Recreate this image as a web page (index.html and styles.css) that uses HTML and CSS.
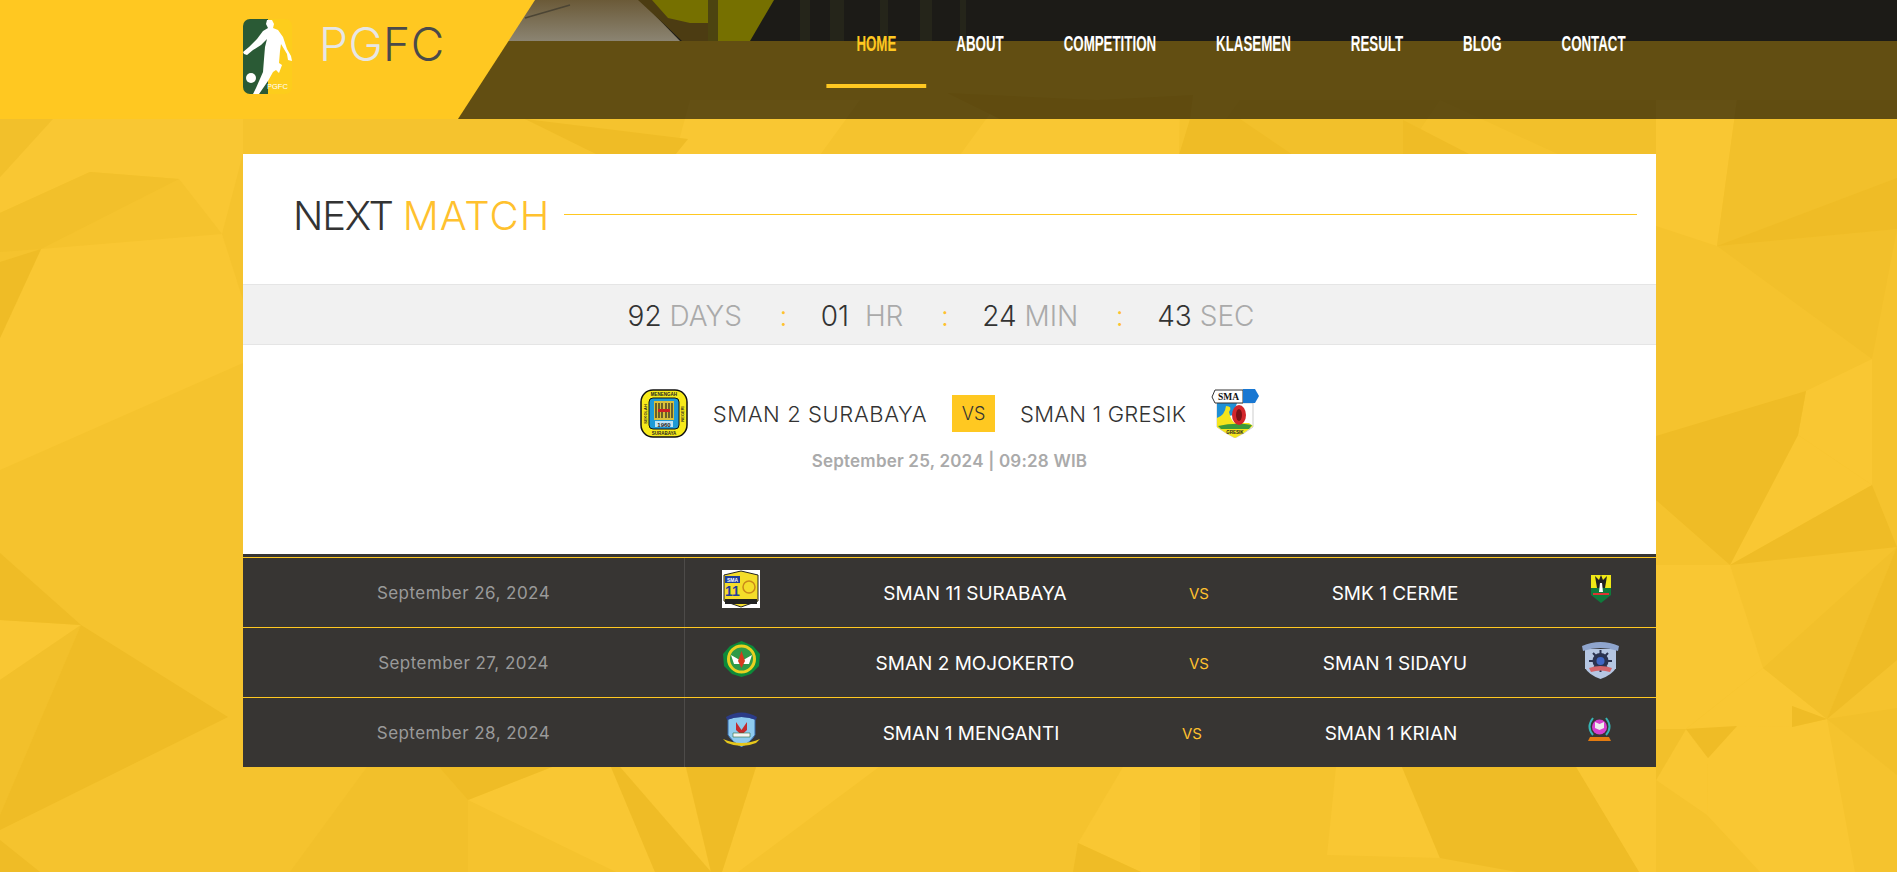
FILE: index.html
```html
<!DOCTYPE html>
<html lang="en">
<head>
  <meta charset="UTF-8" />
  <meta name="viewport" content="width=device-width, initial-scale=1.0" />
  <title>PGFC</title>
  <link rel="stylesheet" href="styles.css">
</head>
<body>
  <!-- faceted yellow wallpaper -->
  <svg class="page-bg" viewBox="0 0 1897 872" aria-hidden="true">
    <rect width="1897" height="872" fill="#f5c32e"/>
    <g fill="#f9c733">
      <polygon points="70,100 243,100 243,154 222,234 179,179 90,172 0,213 0,177"/>
      <polygon points="41,249 222,234 243,300 243,363 0,470 0,338"/>
      <polygon points="0,620 81,625 0,680"/>
      <polygon points="1656,100 1737,100 1717,246 1656,226"/>
      <polygon points="1806,391 1872,359 1872,485 1798,435"/>
      <polygon points="1798,435 1872,485 1730,565"/>
      <polygon points="1656,565 1730,565 1763,668 1686,729 1656,729"/>
      <polygon points="1763,668 1827,719 1792,706 1792,727 1686,729"/>
      <polygon points="1792,727 1827,719 1855,872 1760,872 1707,815 1708,758 1737,726"/>
      <polygon points="1686,729 1708,758 1707,815 1656,780"/>
      <polygon points="552,767 611,767 655,872 616,872 468,800"/>
      <polygon points="620,767 686,767 711,872"/>
      <polygon points="756,767 879,767 738,872 722,872"/>
      <polygon points="1123,767 1200,767 1200,872 1141,872 1078,843"/>
      <polygon points="1336,767 1402,767 1440,858 1327,855"/>
      <polygon points="1576,767 1656,767 1656,872 1639,872"/>
      <polygon points="690,100 860,100 820,155 675,155"/>
      <polygon points="1000,100 1180,100 1179,155 960,155"/>
      <polygon points="1293,155 1285,100 1305,100"/>
    </g>
    <g fill="#f2c02b">
      <polygon points="0,100 70,100 0,177"/>
      <polygon points="90,172 179,179 41,249 0,252 0,213"/>
      <polygon points="0,680 81,625 0,815"/>
      <polygon points="1737,100 1897,100 1897,229 1717,246"/>
      <polygon points="1717,246 1897,229 1872,359"/>
      <polygon points="1763,668 1897,547 1827,719"/>
      <polygon points="1827,719 1897,708 1897,775"/>
      <polygon points="1656,729 1686,729 1656,780"/>
      <polygon points="367,767 439,767 468,800 468,872 290,872"/>
      <polygon points="1200,155 1240,100 1440,100 1403,155"/>
      <polygon points="1440,100 1656,100 1656,155 1560,155"/>
    </g>
    <g fill="#efbc26">
      <polygon points="0,262 41,249 0,338"/>
      <polygon points="0,553 81,625 0,620"/>
      <polygon points="81,625 228,717 0,830 0,815"/>
      <polygon points="0,840 40,872 0,872"/>
      <polygon points="1717,246 1897,178 1897,229"/>
      <polygon points="1656,436 1806,391 1798,435 1730,565 1656,500"/>
      <polygon points="1872,485 1897,547 1730,565"/>
      <polygon points="1897,547 1897,660 1827,719"/>
      <polygon points="1792,706 1827,719 1792,727"/>
      <polygon points="1686,729 1737,726 1708,758"/>
      <polygon points="439,767 552,767 468,800"/>
      <polygon points="611,767 620,767 711,872 655,872"/>
      <polygon points="686,767 756,767 722,872 711,872"/>
      <polygon points="1078,843 1141,872 1073,872"/>
      <polygon points="1402,767 1576,767 1639,872 1517,872 1440,858"/>
      <polygon points="525,119 688,139 675,155 598,155"/>
      <polygon points="1179,155 1190,119 1240,119 1293,155"/>
      <polygon points="1403,120 1471,155 1403,155"/>
      <polygon points="947,93 1097,100 1193,95 1190,119 1000,119"/>
    </g>
  </svg>

  <header class="site-header">
    <svg class="header-photo" viewBox="0 0 1897 41" preserveAspectRatio="none" aria-hidden="true">
      <defs>
        <linearGradient id="floor" x1="0" y1="0" x2="0" y2="1">
          <stop offset="0" stop-color="#6b5a38"/>
          <stop offset="1" stop-color="#8b8472"/>
        </linearGradient>
      </defs>
      <rect width="1897" height="41" fill="#1c1b17"/>
      <polygon points="774,0 750,41 690,41 635,0" fill="#767000"/>
      <polygon points="500,0 640,0 680,41 500,41" fill="url(#floor)"/>
      <polygon points="638,0 652,0 668,18 690,23 712,23 712,41 682,41 664,24" fill="#4c3c12"/>
      <rect x="708" width="10" height="41" fill="#4c4410"/>
      <path d="M525 18 L570 5" stroke="#4c4534" stroke-width="1.5"/>
      <g fill="#25251a">
        <rect x="800" width="10" height="41"/>
        <rect x="830" width="14" height="41"/>
        <rect x="880" width="8" height="41"/>
        <rect x="920" width="12" height="41"/>
        <rect x="960" width="6" height="41"/>
      </g>
    </svg>
    <div class="header-yellow"></div>
    <div class="header-inner">
      <a class="brand" href="#">
        <svg class="brand-logo" viewBox="0 0 49 75">
          <defs><clipPath id="logoClip"><rect width="49" height="75" rx="7"/></clipPath></defs>
          <g clip-path="url(#logoClip)">
            <rect width="49" height="75" fill="#fdcd1c"/>
            <rect width="25" height="75" fill="#2a5a35"/>
          </g>
          <path fill="#fff" d="M24 1 L29 1 L31 5 L30 9 L35 11 L40 18 L44 30 L48 37 L49 42 L45 41 L44 35 L38 25 L37 32 L36 44 L39 46 L36 54 L33 51 L30 53 L25 62 L16 75 L10 75 L13 69 L20 53 L21 40 L22 28 L24 20 L18 26 L10 31 L4 36 L1 35 L0 33 L6 28 L14 20 L20 12 L25 9 L23 5 Z"/>
          <circle cx="8" cy="59" r="5" fill="#fff"/>
          <text class="brand-logo-text" x="24" y="70">PGFC</text>
        </svg>
        <span class="brand-name"><span class="brand-pg">PG</span><span class="brand-fc">FC</span></span>
      </a>
      <div class="nav-wrap">
        <nav class="main-nav">
          <a class="active" href="#">HOME</a>
          <a href="#">ABOUT</a>
          <a href="#">COMPETITION</a>
          <a href="#">KLASEMEN</a>
          <a href="#">RESULT</a>
          <a href="#">BLOG</a>
          <a href="#">CONTACT</a>
        </nav>
      </div>
    </div>
  </header>

  <main class="match-card">
    <div class="card-title">
      <h2>NEXT <span>MATCH</span></h2>
      <div class="title-line"></div>
    </div>

    <div class="countdown">
      <div class="count-unit"><b>92</b> DAYS</div>
      <div class="count-sep">:</div>
      <div class="count-unit"><b>01</b> &nbsp;HR</div>
      <div class="count-sep">:</div>
      <div class="count-unit"><b>24</b> MIN</div>
      <div class="count-sep">:</div>
      <div class="count-unit"><b>43</b> SEC</div>
    </div>

    <section class="next-match">
      <div class="next-teams">
        <svg class="crest-lg" viewBox="0 0 48 49">
          <rect x="1" y="1" width="46" height="47" rx="12" fill="#f7ea1a" stroke="#111" stroke-width="1.5"/>
          <rect x="9" y="9" width="30" height="31" rx="4" fill="#1e9ad6" stroke="#111"/>
          <rect x="14" y="12" width="20" height="19" fill="#d9c13a"/>
          <path d="M16 14v15M19 14v15M22 14v15M26 14v15M29 14v15M32 14v15" stroke="#222" stroke-width="1.2"/>
          <rect x="18" y="20" width="12" height="3" fill="#c22"/>
          <rect x="15" y="32" width="18" height="6" fill="#bfe3f4"/>
          <text class="crest-text" x="24" y="37.500" font-size="6">1960</text>
          <text class="crest-text" x="24" y="7" font-size="4.500">MENENGAH</text>
          <text class="crest-text" x="24" y="45.500" font-size="4.500">SURABAYA</text>
          <text class="crest-text" transform="translate(7 25) rotate(-90)" font-size="4">SEKOLAH</text>
          <text class="crest-text" transform="translate(44 25) rotate(-90)" font-size="4">NEGERI</text>
        </svg>
        <span class="team-name">SMAN 2 SURABAYA</span>
        <span class="vs-box">VS</span>
        <span class="team-name team-name-away">SMAN 1 GRESIK</span>
        <svg class="crest-lg" viewBox="0 0 48 49">
          <path d="M6 14 L42 14 L42 38 Q34 44 24 49 Q14 44 6 38 Z" fill="#fff" stroke="#999" stroke-width=".5"/>
          <path d="M6 14 L26 14 L22 26 L6 30 Z" fill="#1e8fd6"/>
          <path d="M6 36 L6 29 Q14 26 15 17 Q22 17 18 23 Q20 32 24 34 L38 34 L42 37 Q34 44 24 49 Q14 44 6 38 Z" fill="#f5e51c"/>
          <path d="M7 37 Q24 33 41 36 L38 40 L10 40 Z" fill="#3c9a3a"/>
          <ellipse cx="28" cy="26" rx="7" ry="10" fill="#d3262b"/>
          <ellipse cx="28" cy="26" rx="3" ry="6" fill="#7a1215"/>
          <path d="M1 8 L4 1 L32 1 L32 14 L4 14 Z" fill="#fff" stroke="#333"/>
          <path d="M32 0 L44 0 L48 7 L44 14 L32 14 Z" fill="#1877d2"/>
          <text class="crest-serif" x="17.500" y="11" font-size="9.500">SMA</text>
          <text class="crest-text" x="24" y="45" font-size="4.500">GRESIK</text>
        </svg>
      </div>
      <div class="next-date">September 25, 2024 | 09:28 WIB</div>
    </section>

    <section class="fixtures">
      <div class="fixture">
        <div class="fixture-date">September 26, 2024</div>
        <div class="fixture-logo">
          <svg class="crest" width="38" height="38" viewBox="0 0 38 38">
            <rect width="38" height="38" fill="#fff"/>
            <path d="M2 5 L19 1 L36 5 L36 31 L19 37 L2 31 Z" fill="#f4dd2a" stroke="#222"/>
            <rect x="3" y="6" width="15" height="7" fill="#1f3f9c"/>
            <text class="crest-text crest-white" x="10.500" y="11.500" font-size="5">SMA</text>
            <text class="crest-text crest-navy" x="10.500" y="26" font-size="14">11</text>
            <circle cx="27" cy="17" r="6" fill="none" stroke="#c98a1a" stroke-width="1.500"/>
            <rect x="3" y="29" width="32" height="5" fill="#222"/>
          </svg>
        </div>
        <div class="fixture-team">SMAN 11 SURABAYA</div>
        <div class="fixture-vs">VS</div>
        <div class="fixture-team">SMK 1 CERME</div>
        <div class="fixture-logo">
          <svg class="crest crest-up" width="20" height="28" viewBox="0 0 20 28">
            <path d="M0 0 H20 V20 L10 28 L0 20 Z" fill="#0f7a3c"/>
            <rect width="20" height="13" fill="#f0e816"/>
            <path d="M4 1 L6 13 H14 L16 1 L12 5 L10 0 L8 5 Z" fill="#222"/>
            <path d="M9 8 L11 8 L12 17 L8 17 Z" fill="#fff"/>
            <rect x="2" y="18" width="16" height="2" fill="#d33"/>
          </svg>
        </div>
      </div>

      <div class="fixture">
        <div class="fixture-date">September 27, 2024</div>
        <div class="fixture-logo">
          <svg class="crest crest-mid" width="37" height="36" viewBox="0 0 37 36">
            <path d="M18.500 0 L30 5 L37 13 L36 25 L28 33 L18.500 36 L9 33 L1 25 L0 13 L7 5 Z" fill="#0c8a3a"/>
            <circle cx="18.500" cy="18" r="13" fill="#2f9a48" stroke="#e8d021" stroke-width="3"/>
            <path d="M8 14 L18.500 20 L29 14 L26 23 L11 23 Z" fill="#fff"/>
            <path d="M18.500 10 L22 20 L18.500 27 L15 20 Z" fill="#d63a1e"/>
          </svg>
        </div>
        <div class="fixture-team">SMAN 2 MOJOKERTO</div>
        <div class="fixture-vs">VS</div>
        <div class="fixture-team">SMAN 1 SIDAYU</div>
        <div class="fixture-logo">
          <svg class="crest crest-mid" width="37" height="38" viewBox="0 0 37 38">
            <rect x="3" y="8" width="31" height="20" fill="#b5c6e2"/>
            <path d="M3 20 H34 V27 Q30 34 18.500 38 Q7 34 3 27 Z" fill="#b5c6e2"/>
            <path d="M0 5 Q18.500 -3 37 5 L36 10 Q18.500 4 1 10 Z" fill="#8fa5cd"/>
            <circle cx="18.500" cy="20" r="8" fill="#2b3350"/>
            <path d="M7 20h23M18.500 9v22M11 12l15 16M26 12l-15 16" stroke="#2b3350" stroke-width="2"/>
            <circle cx="18.500" cy="20" r="4" fill="#3f66c4"/>
            <path d="M7 27 Q18.500 23 30 27 L28 31 Q18.500 28 9 31 Z" fill="#d3646a"/>
          </svg>
        </div>
      </div>

      <div class="fixture fixture-shift">
        <div class="fixture-date">September 28, 2024</div>
        <div class="fixture-logo">
          <svg class="crest crest-mid" width="37" height="36" viewBox="0 0 37 36">
            <path d="M5 8 Q18.500 3 32 8 L32 24 Q28 31 18.500 36 Q9 31 5 24 Z" fill="#8ecbef" stroke="#3566a8"/>
            <path d="M3 6 Q18.500 -3 34 6 L33 9 Q18.500 3 4 9 Z" fill="#2b3b87"/>
            <path d="M13 11 L18.500 19 L24 11 L24 19 L18.500 24 L13 19 Z" fill="#c42a2e"/>
            <path d="M10 22 H27 V26 H10 Z" fill="#f4f4f4" stroke="#2b6b3a" stroke-width=".6"/>
            <path d="M0 28 Q18.500 36 37 28 L33 32 Q18.500 38 4 32 Z" fill="#e7c81c"/>
          </svg>
        </div>
        <div class="fixture-team">SMAN 1 MENGANTI</div>
        <div class="fixture-vs">VS</div>
        <div class="fixture-team">SMAN 1 KRIAN</div>
        <div class="fixture-logo">
          <svg class="crest crest-krian" width="23" height="24" viewBox="0 0 23 24">
            <path d="M5 1 Q-2 10 5 18 M18 1 Q25 10 18 18" fill="none" stroke="#37b5b5" stroke-width="2"/>
            <circle cx="11.500" cy="10" r="7.500" fill="#d63fcf"/>
            <path d="M7 5 L11.500 7 L16 5 L16 11 L11.500 13 L7 11 Z" fill="#eee"/>
            <path d="M2 20 L21 20 L23 24 L0 24 Z" fill="#e47b10"/>
          </svg>
        </div>
      </div>
    </section>
  </main>
</body>
</html>
```

FILE: styles.css
```css
/* ==========================================================================
   Reset & Global
   ========================================================================== */
*, *::before, *::after {
  margin: 0;
  padding: 0;
  box-sizing: border-box;
}
body {
  position: relative;
  min-height: 100vh;
  overflow: hidden;
  background: #f5c32e;
  font-family: "Inter", "Liberation Sans", sans-serif;
  color: #333;
}
a {
  text-decoration: none;
  color: inherit;
}
.page-bg {
  position: absolute;
  top: 0;
  left: 0;
  width: 1897px;
  height: 872px;
  z-index: -1;
}

/* ==========================================================================
   Header
   ========================================================================== */
.site-header {
  position: relative;
  height: 119px;
  background: rgba(0, 0, 0, 0.6);
}
.header-photo {
  position: absolute;
  top: 0;
  left: 0;
  width: 100%;
  height: 41px;
}
.header-yellow {
  position: absolute;
  top: 0;
  left: 0;
  width: 535px;
  height: 119px;
  background: #ffc821;
  clip-path: polygon(0 0, 100% 0, 458px 100%, 0 100%);
}
.header-inner {
  position: relative;
  width: 1413px;
  margin-left: 243px;
  padding-top: 19px;
  display: flex;
  align-items: flex-start;
}
.brand {
  display: flex;
  flex-shrink: 0;
  align-items: flex-start;
  gap: 27px;
}
.brand-logo {
  display: block;
  width: 49px;
  height: 75px;
}
.brand-logo-text {
  font-family: "Liberation Sans", sans-serif;
  font-size: 7.5px;
  fill: #fff;
}
.brand-name {
  font-size: 46px;
  font-weight: 300;
  line-height: 50px;
  letter-spacing: 0.5px;
}
.brand-pg { color: #e6e6e6; }
.brand-fc { color: #4a4a4a; }

.nav-wrap {
  flex: 1;
  min-width: 0;
  display: flex;
  justify-content: flex-end;
}
.main-nav {
  display: flex;
  flex-shrink: 0;
  font-family: "Liberation Sans", sans-serif;
  font-size: 22px;
  font-weight: 700;
  line-height: 24px;
  color: #fff;
  transform: scaleX(0.605);
  transform-origin: right center;
}
.main-nav a {
  display: block;
  padding: 13px 49.6px 28px;
  border-bottom: 4px solid transparent;
}
.main-nav a.active {
  color: #ffc821;
  border-bottom-color: #ffc821;
}

/* ==========================================================================
   Match card
   ========================================================================== */
.match-card {
  width: 1413px;
  margin: 35px 0 0 243px;
  background: #fff;
}
.card-title {
  height: 130px;
  padding: 35px 19px 0 50px;
  display: flex;
  align-items: flex-start;
  gap: 14px;
}
.card-title h2 {
  padding-top: 2px;
  font-size: 40px;
  font-weight: 300;
  line-height: 50px;
  letter-spacing: -1.2px;
  color: #333;
}
.card-title h2 span {
  letter-spacing: 1px;
  color: #ffc12e;
}
.title-line {
  flex: 1;
  height: 1px;
  margin-top: 25px;
  background: #ffc821;
}

.countdown {
  height: 61px;
  padding: 2px 17px 0 0;
  display: flex;
  justify-content: center;
  align-items: center;
  gap: 35.5px;
  background: #f1f1f1;
  border-top: 1px solid #e5e5e5;
  border-bottom: 1px solid #e5e5e5;
  font-size: 28px;
  font-weight: 350;
  color: #aaa;
}
.count-unit b {
  font-weight: 350;
  color: #333;
}
.count-sep {
  margin: 0 -2px 0 2px;
  color: #ffc12e;
}

.next-match {
  height: 209px;
  padding-top: 44px;
}
.next-teams {
  display: flex;
  justify-content: center;
  align-items: center;
  gap: 25px;
}
.crest-lg {
  display: block;
  width: 48px;
  height: 49px;
}
.crest-text {
  font-family: "Liberation Sans", sans-serif;
  font-weight: 700;
  text-anchor: middle;
  fill: #222;
}
.crest-serif {
  font-family: "Liberation Serif", serif;
  font-weight: 700;
  text-anchor: middle;
  fill: #111;
}
.crest-white { fill: #fff; }
.crest-navy { fill: #1f3f9c; }
.team-name {
  font-size: 22px;
  font-weight: 350;
  letter-spacing: 0.6px;
  color: #333;
}
.team-name-away { letter-spacing: 0.2px; }
.vs-box {
  width: 43px;
  height: 37px;
  display: flex;
  justify-content: center;
  align-items: center;
  background: #ffc821;
  font-size: 18px;
  font-weight: 300;
}
.next-date {
  margin-top: 13px;
  text-align: center;
  font-size: 17px;
  font-weight: 600;
  letter-spacing: 0.2px;
  color: #aaa;
}

/* ==========================================================================
   Fixtures
   ========================================================================== */
.fixtures {
  padding-top: 3px;
  background: #373533;
}
.fixture {
  height: 70px;
  display: grid;
  grid-template-columns: 442px 112px 356px 92px 300px 1fr;
  align-items: center;
  border-top: 1px solid #ffc821;
}
.fixture-shift {
  grid-template-columns: 442px 112px 348px 94px 304px 1fr;
}
.fixture-date {
  height: 100%;
  display: flex;
  justify-content: center;
  align-items: center;
  border-right: 1px solid #4d4b49;
  font-size: 17px;
  letter-spacing: 0.45px;
  color: #9a9a9a;
}
.fixture-logo {
  height: 100%;
  display: flex;
  justify-content: center;
}
.crest { display: block; margin-top: 12px; }
.crest-up { margin-top: 17px; }
.crest-mid { margin-top: 13px; }
.crest-krian { margin-top: 19px; }
.fixture-team {
  padding-top: 2px;
  text-align: center;
  font-size: 19px;
  font-weight: 400;
  color: #fff;
}
.fixture-vs {
  padding-top: 2px;
  text-align: center;
  font-size: 15px;
  color: #ffc12e;
}
```
